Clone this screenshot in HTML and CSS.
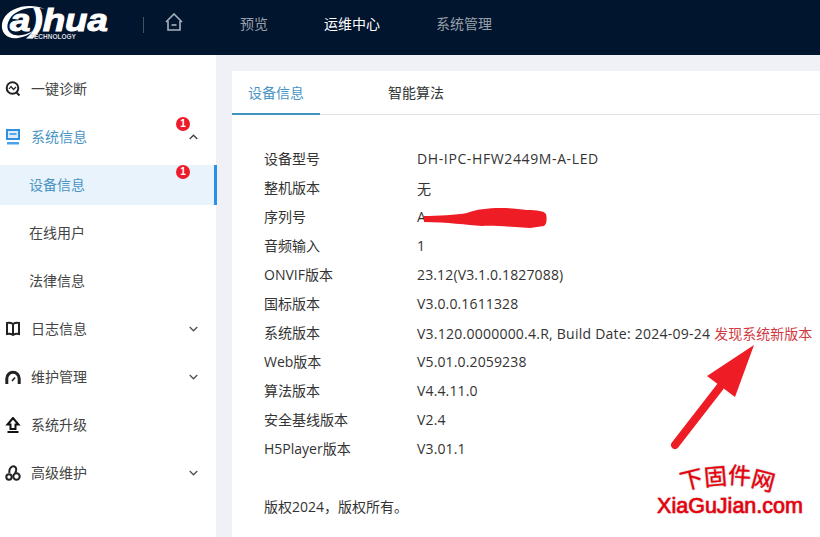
FILE: index.html
```html
<!DOCTYPE html>
<html lang="zh-CN">
<head>
<meta charset="utf-8">
<title>设备信息</title>
<link rel="stylesheet" href="styles.css">
</head>
<body>
<header class="topbar">
  <div class="logo">
    <svg class="logo-swoosh" width="46" height="40" viewBox="0 0 46 40"><path d="M45 6C30 0 10 3 3 17-1 28 6 37 18 35c6-1 11-3 15-7-7 4-15 6-21 3C6 28 6 21 11 14 18 6 32 3 45 6z" fill="#fff"/></svg>
    <span class="logo-word">a)hua</span>
    <span class="logo-sub">TECHNOLOGY</span>
  </div>
  <span class="divider"></span>
  <svg class="home" width="18" height="18" viewBox="0 0 18 18" fill="none" stroke="#a9b3c0" stroke-width="1.6"><path d="M1 9l8-8 8 8"/><path d="M3 8v9h12V8"/><path d="M6.500 12h5"/></svg>
  <nav class="topnav">
    <span class="topitem">预览</span>
    <span class="topitem current">运维中心</span>
    <span class="topitem">系统管理</span>
  </nav>
</header>
<div class="body">
  <aside class="sidebar">
    <div class="menu-row">
      <svg class="mi" width="16" height="16" viewBox="0 0 16 16" fill="none" stroke="#222" stroke-width="2"><circle cx="7.500" cy="7" r="5.800"/><path d="M11.500 11.500l3 3"/><path d="M4 8l2-2.500 2.500 3L11 6" stroke-width="1.200"/></svg>
      <span class="ml">一键诊断</span>
    </div>
    <div class="menu-row open">
      <svg class="mi" width="16" height="16" viewBox="0 0 16 16"><path d="M1 0h14v11H1z" fill="#2f8fe0"/><path d="M3 2h10v7H3z" fill="#dcecfa"/><path d="M4.500 5h7" stroke="#2f8fe0" stroke-width="1.500"/><path d="M2 13h12v2.500H2z" fill="#4aa3ea"/></svg>
      <span class="ml">系统信息</span>
      <span class="badge">1</span>
      <svg class="chev" width="9" height="6" viewBox="0 0 9 6" fill="none" stroke="#444" stroke-width="1.400"><path d="M.7 5l3.800-3.800L8.300 5"/></svg>
    </div>
    <div class="sub active"><span class="sl">设备信息</span><span class="badge">1</span></div>
    <div class="sub"><span class="sl">在线用户</span></div>
    <div class="sub"><span class="sl">法律信息</span></div>
    <div class="menu-row">
      <svg class="mi" width="16" height="16" viewBox="0 0 16 16" fill="none" stroke="#222" stroke-width="2"><path d="M8 3C6.500 2 4 1.500 2 2v11c2-.5 4.500 0 6 1 1.500-1 4-1.500 6-1V2C12 1.500 9.500 2 8 3zM8 3v11"/></svg>
      <span class="ml">日志信息</span>
      <svg class="chev" width="9" height="6" viewBox="0 0 9 6" fill="none" stroke="#555" stroke-width="1.400"><path d="M.7 1l3.800 3.800L8.300 1"/></svg>
    </div>
    <div class="menu-row">
      <svg class="mi" width="16" height="16" viewBox="0 0 16 16" fill="none" stroke="#222" stroke-width="3"><path d="M1.800 15V9.500a6.200 6.200 0 0 1 12.400 0V15"/><path d="M7 12l3-3.500" stroke-width="1.600"/></svg>
      <span class="ml">维护管理</span>
      <svg class="chev" width="9" height="6" viewBox="0 0 9 6" fill="none" stroke="#555" stroke-width="1.400"><path d="M.7 1l3.800 3.800L8.300 1"/></svg>
    </div>
    <div class="menu-row">
      <svg class="mi" width="16" height="16" viewBox="0 0 16 16"><path d="M8 1L2.500 7.500H5.500V12h5V7.500h3z" fill="none" stroke="#111" stroke-width="2"/><path d="M2.500 14h11v2h-11z" fill="#111"/></svg>
      <span class="ml">系统升级</span>
    </div>
    <div class="menu-row">
      <svg class="mi" width="16" height="16" viewBox="0 0 16 16" fill="none" stroke="#222" stroke-width="2"><circle cx="4" cy="12" r="2.700"/><circle cx="11.500" cy="11.500" r="3.200"/><path d="M4.500 8C3.500 3.500 7 .5 9.500 1.500 12 2.500 11.500 6 10 8"/></svg>
      <span class="ml">高级维护</span>
      <svg class="chev" width="9" height="6" viewBox="0 0 9 6" fill="none" stroke="#555" stroke-width="1.400"><path d="M.7 1l3.800 3.800L8.300 1"/></svg>
    </div>
  </aside>
  <main class="main">
    <section class="card">
      <div class="tabs">
        <span class="tab on">设备信息</span>
        <span class="tab">智能算法</span>
      </div>
      <dl class="info">
        <div class="row"><dt>设备型号</dt><dd class="caps">DH-IPC-HFW2449M-A-LED</dd></div>
        <div class="row"><dt>整机版本</dt><dd>无</dd></div>
        <div class="row"><dt>序列号</dt><dd>A</dd></div>
        <div class="row"><dt>音频输入</dt><dd>1</dd></div>
        <div class="row"><dt>ONVIF版本</dt><dd>23.12(V3.1.0.1827088)</dd></div>
        <div class="row"><dt>国标版本</dt><dd>V3.0.0.1611328</dd></div>
        <div class="row"><dt>系统版本</dt><dd><span class="build">V3.120.0000000.4.R, Build Date: 2024-09-24</span><span class="new">发现系统新版本</span></dd></div>
        <div class="row"><dt>Web版本</dt><dd>V5.01.0.2059238</dd></div>
        <div class="row"><dt>算法版本</dt><dd>V4.4.11.0</dd></div>
        <div class="row"><dt>安全基线版本</dt><dd>V2.4</dd></div>
        <div class="row"><dt>H5Player版本</dt><dd>V3.01.1</dd></div>
      </dl>
      <p class="copy">版权2024，版权所有。</p>
    </section>
  </main>
</div>
<svg class="scribble" width="126" height="23" viewBox="0 0 126 23"><path d="M2 9C15 9 35 8 45 6 60 0 85 0 105 3c10 0 17 1 19 4 1 4 1 10-2 12l-14 2C90 20 70 18 60 19 45 18 25 15 2 15z" fill="#ee1c25"/></svg>
<svg class="arrow" width="92" height="112" viewBox="0 0 92 112"><path d="M7 105L52 47" stroke="#ee1c25" stroke-width="8" stroke-linecap="round"/><path d="M86 5L39 36 67 57z" fill="#ee1c25"/></svg>
<div class="wm">
  <div class="wm-top"><span class="c1">下</span><span class="c2">固</span><span class="c3">件</span><span class="c4">网</span></div>
  <div class="wm-url">XiaGuJian.com</div>
</div>
</body>
</html>
```
FILE: styles.css
```css
* { box-sizing: border-box; }
html, body { margin: 0; height: 100%; overflow: hidden; }
body {
  position: relative;
  width: 820px;
  height: 537px;
  background: #f0f1f6;
  font-family: "Open Sans", "Noto Sans CJK SC", sans-serif;
  font-size: 14px;
  color: #333;
}
.topbar {
  height: 55px;
  background: #02152e;
  display: flex;
  align-items: center;
  color: #fff;
}
.logo { position: relative; width: 143px; height: 55px; flex: none; }
.logo-swoosh { position: absolute; left: 0; top: 3px; }
.logo-word {
  position: absolute;
  left: 10px;
  top: 10px;
  font: italic 700 31px/22px "Liberation Sans", sans-serif;
  -webkit-text-stroke: 1px #fff;
  transform: scaleX(1.185);
  transform-origin: left center;
}
.logo-sub {
  position: absolute;
  left: 30px;
  top: 33px;
  font: 700 6.500px/7px "Liberation Sans", sans-serif;
  color: #d5d9de;
}
.divider { width: 1px; height: 16px; background: #46535f; flex: none; margin-top: -6px; }
.home { margin: -11px 0 0 21px; flex: none; }
.topnav { display: flex; margin: -10px 0 0 57px; gap: 56px; }
.topitem { color: #98a0a9; }
.topitem.current { color: #fff; }
.body { display: flex; height: 482px; }
.sidebar {
  width: 216px;
  flex: none;
  background: #fff;
  padding-top: 10px;
  display: flex;
  flex-direction: column;
}
.menu-row {
  position: relative;
  height: 48px;
  flex: none;
  display: flex;
  align-items: center;
  padding-left: 5px;
  color: #444;
}
.mi { flex: none; }
.ml { margin: -2px 0 0 10px; }
.sl { margin-top: -2px; }
.menu-row.open { color: #4a94c4; }
.chev { position: absolute; left: 189px; top: 21px; }
.badge {
  position: absolute;
  width: 14px;
  height: 14px;
  border-radius: 50%;
  background: #ed1c2b;
  color: #fff;
  font: 700 10px/14px "Liberation Sans", sans-serif;
  text-align: center;
  left: 176px;
  top: 4px;
}
.sub {
  position: relative;
  height: 40px;
  flex: none;
  margin: 4px 0;
  padding-left: 29px;
  display: flex;
  align-items: center;
  color: #444;
}
.sub.active {
  background: #e8f3fc;
  color: #4a94c4;
  border-right: 3px solid #2b8fe6;
  margin-right: -1px;
}
.sub .badge { top: 0; }
.main { flex: 1; padding: 16px 0 0 16px; min-width: 0; }
.card { background: #fff; height: 466px; }
.tabs {
  height: 44px;
  display: flex;
  border-bottom: 1px solid #dfe2e6;
}
.tab {
  height: 44px;
  line-height: 44px;
  padding-left: 16px;
  color: #333;
}
.tab:first-child { width: 88px; }
.tab:last-child { margin-left: 52px; padding-left: 16px; }
.tab.on { color: #4a94c4; border-bottom: 2px solid #4393c1; }
.info { margin: 29px 0 0 32px; }
.row { display: flex; height: 29px; align-items: center; }
dt { width: 153px; flex: none; margin-top: -2px; }
dd { margin: 0; white-space: nowrap; letter-spacing: .14px; }
dd.caps { letter-spacing: .62px; }
.build { letter-spacing: .24px; }
.new { color: #cf3a44; margin-left: 4px; letter-spacing: 0; }
.copy { margin: 34px 0 0 32px; line-height: 20px; }
.scribble { position: absolute; left: 422px; top: 207px; }
.arrow { position: absolute; left: 668px; top: 340px; }
.wm { position: absolute; left: 645px; top: 460px; width: 170px; text-align: center; color: #e8000d; }
.wm-top {
  height: 34px;
  display: flex;
  justify-content: center;
  gap: 1px;
  margin-left: -5px;
  font: 23px/32px "Noto Sans CJK SC", sans-serif;
  -webkit-text-stroke: .3px #e8000d;
  text-shadow: 0 0 2px #aaa;
}
.c1 { transform: translateY(2px) rotate(-14deg); }
.c2 { transform: translateY(-1px) rotate(-5deg); }
.c3 { transform: translateY(-2px) rotate(4deg); }
.c4 { transform: translateY(3px) rotate(15deg); }
.wm-url {
  font: 400 21.500px/24px "Liberation Sans", sans-serif;
  -webkit-text-stroke: .6px #e8000d;
  margin-top: 0;
  text-shadow: 0 0 2px #aaa;
}
```
